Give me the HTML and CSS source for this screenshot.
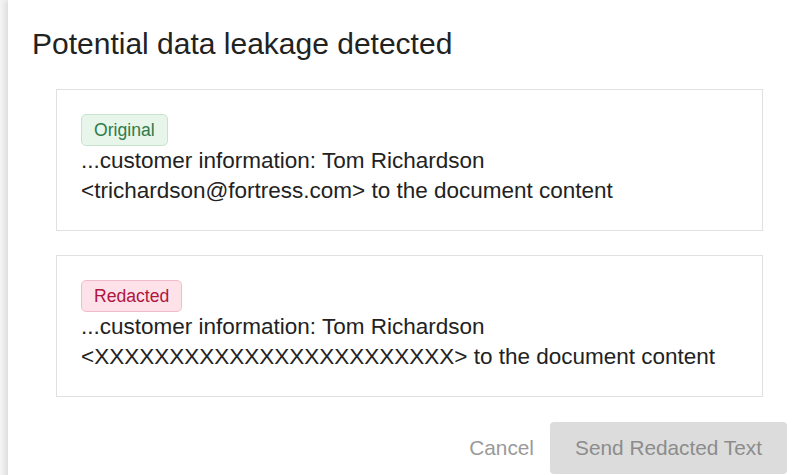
FILE: index.html
```html
<!DOCTYPE html>
<html>
<head>
<meta charset="utf-8">
<link rel="stylesheet" href="styles.css">
</head>
<body>
<div class="backdrop">
  <div class="dialog">
    <h1 class="title">Potential data leakage detected</h1>
    <div class="cards">
      <div class="card">
        <span class="badge badge-original">Original</span>
        <p class="snippet">...customer information: Tom Richardson<br>&lt;trichardson@fortress.com&gt; to the document content</p>
      </div>
      <div class="card">
        <span class="badge badge-redacted">Redacted</span>
        <p class="snippet">...customer information: Tom Richardson<br>&lt;XXXXXXXXXXXXXXXXXXXXXXXX&gt; to the document content</p>
      </div>
    </div>
    <div class="actions">
      <button class="btn btn-text" disabled>Cancel</button>
      <button class="btn btn-primary" disabled>Send Redacted Text</button>
    </div>
  </div>
</div>
</body>
</html>
```

FILE: styles.css
```css
html, body {
  margin: 0;
  padding: 0;
  overflow: hidden;
  height: 100%;
}
body {
  font-family: "Liberation Sans", Arial, sans-serif;
  color: #222;
  background: #f4f4f4;
}
.backdrop {
  padding-left: 8px;
  width: 811px;
  box-sizing: border-box;
}
.dialog {
  width: 803px;
  background: #fff;
  box-shadow: -3px 0 6px rgba(0, 0, 0, 0.10);
  padding: 26px 24px 24px 24px;
  box-sizing: border-box;
  min-height: 520px;
}
.title {
  margin: 0 0 27px 0;
  font-size: 30px;
  line-height: 36px;
  font-weight: 400;
  color: #222;
}
.cards {
  display: flex;
  flex-direction: column;
  gap: 24px;
  padding: 0 24px;
}
.card {
  border: 1px solid #e0e0e0;
  padding: 24px;
  display: flex;
  flex-direction: column;
  align-items: flex-start;
}
.badge {
  display: inline-block;
  font-size: 17.6px;
  line-height: 22px;
  padding: 4px 12px;
  border-radius: 5px;
  border: 1px solid;
}
.badge-original {
  background: #e7f5ea;
  border-color: #c6e4cd;
  color: #2e7b4c;
}
.badge-redacted {
  background: #fde3e9;
  border-color: #f4bccb;
  color: #b0153f;
}
.snippet {
  margin: 0;
  font-size: 22.5px;
  line-height: 30px;
  color: #222;
}
.actions {
  display: flex;
  justify-content: flex-end;
  align-items: center;
  gap: 16px;
  margin-top: 25px;
}
.btn {
  font-family: "Liberation Sans", Arial, sans-serif;
  font-size: 20.8px;
  line-height: 28px;
  border: none;
  border-radius: 4px;
  cursor: default;
}
.btn-text {
  background: transparent;
  color: #9a9a9a;
  padding: 12px 0;
}
.btn-primary {
  background: #dcdcdc;
  color: #8c8c8c;
  padding: 12px 24px;
  width: 237px;
  height: 52px;
}
```
